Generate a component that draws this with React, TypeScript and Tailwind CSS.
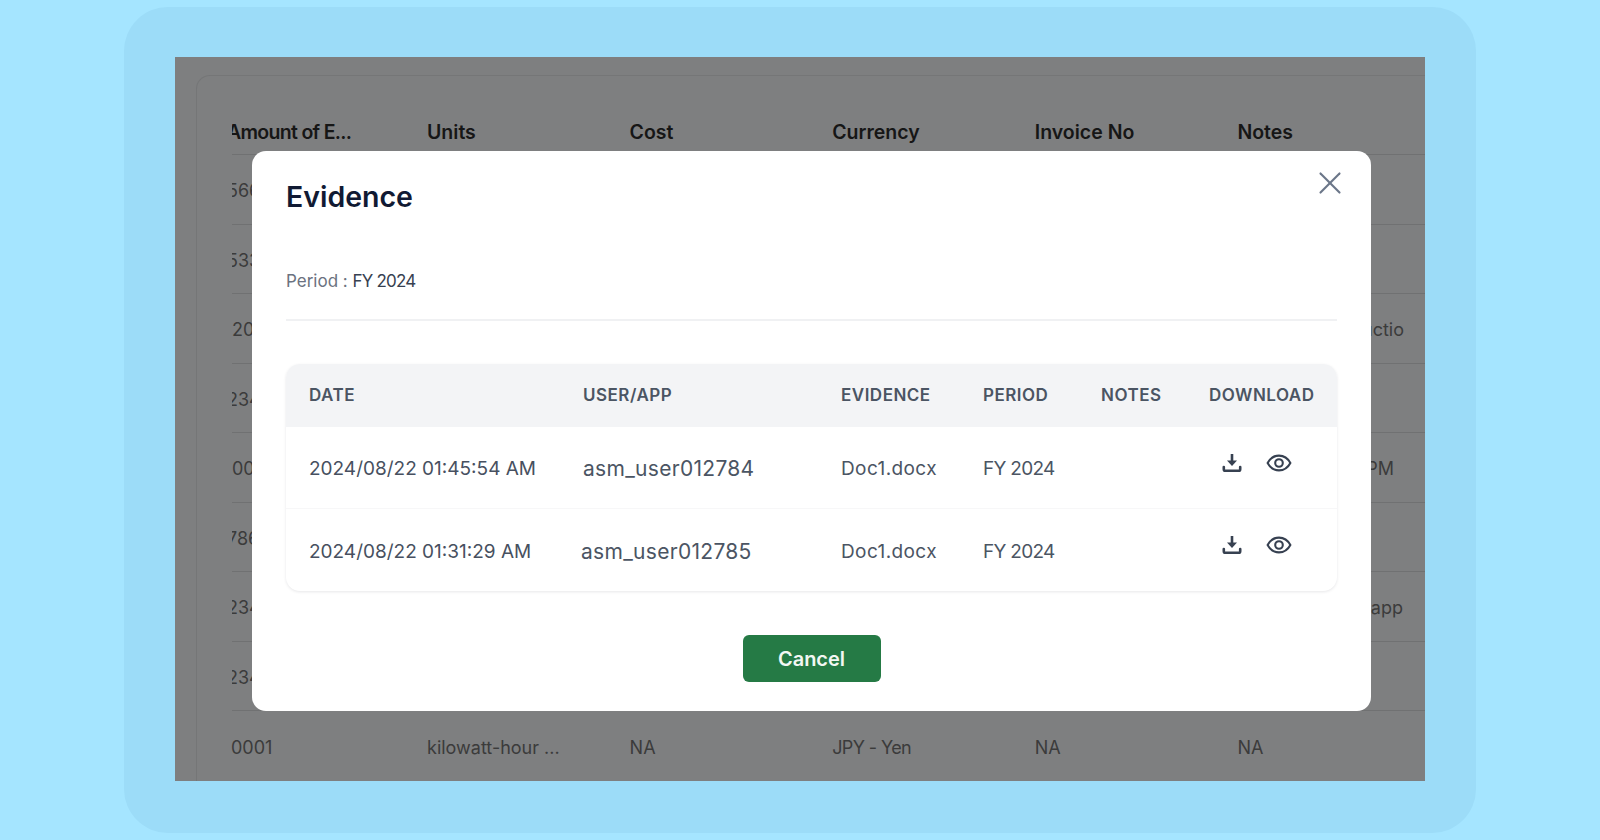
import { X } from "lucide-react"

const columns = ["Units", "Cost", "Currency", "Invoice No", "Notes"]

const backRows = [
  { first: "566", shift: "-ml-[5px]", notes: "", notesClass: "" },
  { first: "533", shift: "-ml-[5px]", notes: "", notesClass: "" },
  { first: "20", shift: "ml-0", notes: "Energy productio", notesClass: "" },
  { first: "234", shift: "-ml-[5px]", notes: "", notesClass: "" },
  { first: "00", shift: "ml-0", notes: "At 01:45 PM", notesClass: "pr-[10px]" },
  { first: "786", shift: "-ml-[5px]", notes: "", notesClass: "" },
  { first: "234", shift: "-ml-[5px]", notes: "Uploaded via app", notesClass: "pr-[1px]" },
  { first: "234", shift: "-ml-[5px]", notes: "", notesClass: "" },
]

const evidence = [
  { date: "2024/08/22 01:45:54 AM", user: "asm_user012784", userClass: "" },
  { date: "2024/08/22 01:31:29 AM", user: "asm_user012785", userClass: "-ml-[2px]" },
]

const gridCols = "grid grid-cols-[274px_258px_142px_118px_108px_1fr] pl-[23px]"

function DownloadIcon() {
  return (
    <svg width="20" height="20" viewBox="0 0 20 20" className="text-[#374151]">
      <path d="M10 1v9" stroke="currentColor" strokeWidth="2.6" fill="none" />
      <path d="M5 7.5h10L10 13z" fill="currentColor" />
      <path d="M1.8 14v2.2c0 1 .7 1.6 1.6 1.6h13.2c.9 0 1.6-.6 1.6-1.6V14" stroke="currentColor" strokeWidth="2.6" fill="none" strokeLinecap="round" />
    </svg>
  )
}

function EyeIcon() {
  return (
    <svg width="26" height="20" viewBox="0 0 26 20" fill="none" stroke="currentColor" strokeWidth="2.1" className="text-[#374151]">
      <path d="M1.6 10C4.2 5.2 8.2 2.6 13 2.6S21.800 5.200 24.400 10C21.800 14.800 17.800 17.400 13 17.400S4.200 14.800 1.600 10Z" strokeLinejoin="round" />
      <circle cx="13" cy="10" r="3.800" />
    </svg>
  )
}

export default function App() {
  return (
    <div className="h-[840px] w-full overflow-hidden bg-[#a5e5ff] px-[124px] py-[7px] font-['Inter',sans-serif]">
      <div className="h-[826px] rounded-[44px] bg-[#9cdcf8] pb-[52px] pl-[51px] pr-[51px] pt-[50px]">
        <div className="relative h-[724px] overflow-hidden bg-[#7e7f80]">
          {/* table behind the dialog */}
          <div className="ml-[21px] mt-[18px] h-[760px] rounded-tl-[14px] border-l border-t border-[#757677] pl-[35px]">
            <div className="flex h-[79px] items-end border-b border-[#707172] pb-[7px] text-[19.5px] font-semibold text-[#161616]">
              <div className="w-[195px] shrink-0 overflow-hidden whitespace-nowrap">
                <span className="-ml-[5px] block tracking-[-0.7px]">Amount of E...</span>
              </div>
              {columns.map((col) => (
                <div key={col} className="w-[202.6px] shrink-0 whitespace-nowrap">{col}</div>
              ))}
            </div>
            {backRows.map((row, i) => (
              <div key={i} className="flex h-[69.5px] items-center border-b border-[#707172] pt-[3px] text-[18px] text-[#3b3b3b]">
                <div className="w-[195px] shrink-0 overflow-hidden">
                  <span className={`block ${row.shift}`}>{row.first}</span>
                </div>
                <div className={`ml-[810px] w-[167px] shrink-0 whitespace-nowrap text-right ${row.notesClass}`}>{row.notes}</div>
              </div>
            ))}
            <div className="flex h-[69.5px] items-center pt-[3px] text-[18px] text-[#3b3b3b]">
              <div className="w-[196px] shrink-0 -ml-[1px]">0001</div>
              <div className="w-[202.6px] shrink-0">kilowatt-hour ...</div>
              <div className="w-[202.6px] shrink-0">NA</div>
              <div className="w-[202.6px] shrink-0 tracking-[-0.6px]">JPY - Yen</div>
              <div className="w-[202.6px] shrink-0">NA</div>
              <div className="w-[167px] shrink-0">NA</div>
            </div>
          </div>

          {/* dialog */}
          <div className="absolute left-[77px] top-[94px] flex h-[560px] w-[1119px] flex-col rounded-[14px] bg-white px-[34px]">
            <div className="flex items-start justify-between pt-[26px]">
              <h2 className="text-[28.500px] font-semibold leading-[40px] text-[#111a33]">Evidence</h2>
              <X size={38} strokeWidth={1.35} className="-mr-[12px] -mt-[13px] text-[#6b7689]" />
            </div>
            <p className="mt-[52px] text-[17px] leading-[24px] text-[#6b7280]">
              Period : <span className="tracking-[-0.8px] text-[#374151]">FY 2024</span>
            </p>
            <div className="mt-[26px] h-[2px] bg-[#f0f1f3]" />
            <div className="mt-[43px] rounded-[14px] bg-white shadow-[0_1px_3px_rgba(16,24,40,0.10)]">
              <div className={`${gridCols} h-[63px] items-center rounded-t-[14px] bg-[#f3f4f6] text-[17px] font-semibold uppercase tracking-[0.5px] text-[#4b5563]`}>
                <div>Date</div>
                <div>User/App</div>
                <div>Evidence</div>
                <div>Period</div>
                <div>Notes</div>
                <div>Download</div>
              </div>
              {evidence.map((row, i) => (
                <div key={row.user} className={`${gridCols} h-[82px] items-center pt-[4px] text-[19px] text-[#4b5563] ${i === 0 ? "border-b border-[#f7f7f8]" : ""}`}>
                  <div className="text-[#475060]">{row.date}</div>
                  <div className={`-mt-[1px] text-[21px] tracking-[0.3px] ${row.userClass}`}>{row.user}</div>
                  <div className="tracking-[0.4px]">Doc1.docx</div>
                  <div className="tracking-[-0.7px]">FY 2024</div>
                  <div />
                  <div className="-mt-[14px] flex items-center gap-[24px] pl-[13px]">
                    <DownloadIcon />
                    <EyeIcon />
                  </div>
                </div>
              ))}
            </div>
            <button className="mx-auto mt-[44px] h-[47px] w-[138px] rounded-[6px] bg-[#257a45] text-[20px] font-semibold text-[#f2f7f3]">
              Cancel
            </button>
          </div>
        </div>
      </div>
    </div>
  )
}
